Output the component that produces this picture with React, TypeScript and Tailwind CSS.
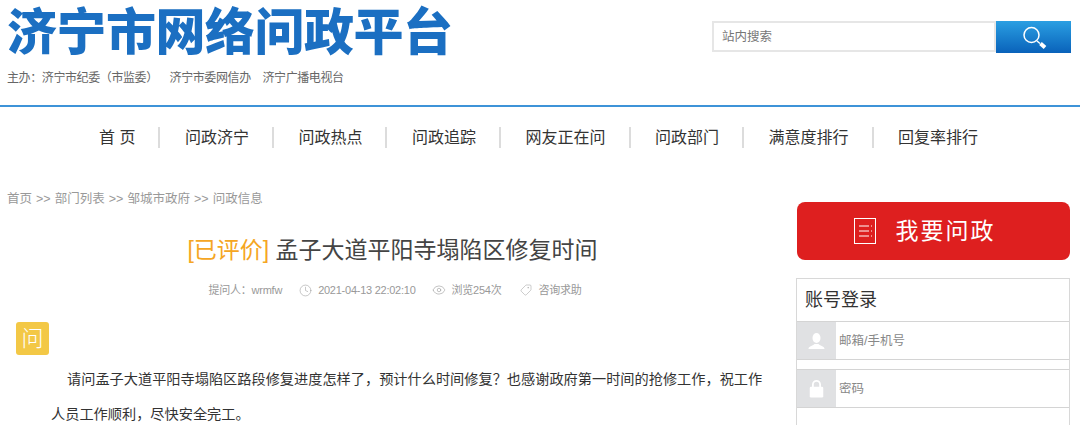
import { Clock, Eye, Tag } from "lucide-react";

const font = "font-['Liberation_Sans','Noto_Sans_CJK_SC',sans-serif]";

const navLinks = ["首 页", "问政济宁", "问政热点", "问政追踪", "网友正在问", "问政部门", "满意度排行", "回复率排行"];

const Header = () => (
  <header className="h-[107px] border-b-2 border-[#3d93d8] flex justify-between">
    <div className="pl-[7px] pt-[5px]">
      <h1 className="text-[50px] leading-[57px] font-black tracking-[-0.5px] text-[#1b6fc2] whitespace-nowrap">济宁市网络问政平台</h1>
      <p className="mt-[8px] text-[12px] leading-[16px] tracking-[-0.4px] text-[#666] whitespace-pre">主办：济宁市纪委（市监委）    济宁市委网信办    济宁广播电视台</p>
    </div>
    <div className="flex pt-[21px] pr-[9px] h-fit">
      <div className="w-[284px] h-[31px] border-2 border-[#e6e6e6] pl-2 text-[12.5px] leading-[29px] text-[#777]">站内搜索</div>
      <button className="w-[75px] h-[32px] bg-gradient-to-b from-[#2b9fe2] to-[#0a62ba] flex items-center justify-center">
        <svg width="26" height="26" viewBox="0 0 26 26" fill="none">
          <circle cx="10.5" cy="11" r="7.5" stroke="white" strokeWidth="1.5" />
          <path d="M16 17l3 2.5" stroke="white" strokeWidth="1.5" />
          <path d="M19.5 19.5l4.5 4" stroke="white" strokeWidth="4" />
        </svg>
      </button>
    </div>
  </header>
);

const Nav = () => (
  <nav className="flex pl-[74.5px] mt-[20px] h-[21px] items-center">
    {navLinks.map((link, i) => (
      <a key={link} className={`pl-[24.5px] pr-[23px] text-[16px] leading-[21px] text-[#333] whitespace-nowrap ${i < navLinks.length - 1 ? "border-r-2 border-[#dcdcdc]" : ""}`}>
        {link}
      </a>
    ))}
  </nav>
);

const Question = () => (
  <div className="w-[778px] pl-[7px]">
    <div className="text-[12.5px] leading-[16px] [word-spacing:0.6px] text-[#999]">首页 &gt;&gt; 部门列表 &gt;&gt; 邹城市政府 &gt;&gt; 问政信息</div>
    <h2 className="mt-[27px] text-center text-[23px] leading-[32px] text-[#444]">
      <span className="text-[#f5a623]">[已评价]</span> 孟子大道平阳寺塌陷区修复时间
    </h2>
    <div className="mt-[16px] pl-[5px] flex justify-center text-[11px] leading-[16px] tracking-[-0.25px] text-[#999]">
      <span>提问人：wrmfw</span>
      <span className="ml-[17px] flex items-center gap-[6px]"><Clock size={13} strokeWidth={1} />2021-04-13 22:02:10</span>
      <span className="ml-[16px] flex items-center gap-[6px]"><Eye size={14} strokeWidth={1} />浏览254次</span>
      <span className="ml-[19px] flex items-center gap-[6px]"><Tag size={12} strokeWidth={1} className="-scale-x-100" />咨询求助</span>
    </div>
    <div className="mt-[24px] ml-[9px] w-[33px] h-[33px] rounded-[3px] bg-[#f3c846] text-white text-[22px] font-light leading-[33px] text-center">问</div>
    <p className="mt-[7px] ml-[44px] w-[712px] text-[14.2px] leading-[35px] text-[#333] indent-[16px]">
      请问孟子大道平阳寺塌陷区路段修复进度怎样了，预计什么时间修复？也感谢政府第一时间的抢修工作，祝工作人员工作顺利，尽快安全完工。
    </p>
  </div>
);

const Field = ({ label, icon }: { label: string; icon: React.ReactNode }) => (
  <div className="h-[39px] border-y border-[#d4d4d4] flex items-center">
    <div className="w-[39px] h-full bg-[#e0e1e3] flex items-center justify-center">{icon}</div>
    <span className="ml-[3px] pt-[1px] text-[12.5px] text-[#888]">{label}</span>
  </div>
);

const Sidebar = () => (
  <aside className="w-[273px] mr-[10px] mt-[11px] shrink-0">
    <button className="w-full h-[58px] pr-[18px] rounded-[8px] bg-[#de1f1f] flex items-center justify-center gap-[20px] text-white text-[23px] tracking-[2px]">
      <svg width="22" height="26" viewBox="0 0 22 26" fill="none" stroke="white">
        <rect x="0.5" y="0.5" width="21" height="25" />
        <path d="M5 8h10M5 13h10M5 18h10M17 8h1M17 13h1M17 18h1" />
      </svg>
      我要问政
    </button>
    <div className="mt-[18px] -ml-[1px] w-[274px] h-[200px] border border-[#d8d8d8]">
      <div className="h-[42px] pl-[8px] text-[18px] leading-[42px] text-[#333]">账号登录</div>
      <Field
        label="邮箱/手机号"
        icon={
          <svg width="17" height="16" viewBox="0 0 16 16" fill="white">
            <ellipse cx="8" cy="5" rx="4" ry="5" />
            <path d="M0 16c0-3 4-3 6-5h4c2 2 6 2 6 5z" />
          </svg>
        }
      />
      <div className="h-[9px]" />
      <Field
        label="密码"
        icon={
          <svg width="15" height="18" viewBox="0 0 16 20" fill="white">
            <path d="M3 8V5a5 5 0 0 1 10 0v3h-2V5a3 3 0 0 0-6 0v3z" />
            <rect x="0.5" y="7.5" width="15" height="12" rx="1.5" />
          </svg>
        }
      />
    </div>
  </aside>
);

export default function App() {
  return (
    <div className={`w-[1080px] h-[425px] overflow-hidden bg-white ${font}`}>
      <Header />
      <Nav />
      <main className="mt-[43px] flex justify-between">
        <Question />
        <Sidebar />
      </main>
    </div>
  );
}
